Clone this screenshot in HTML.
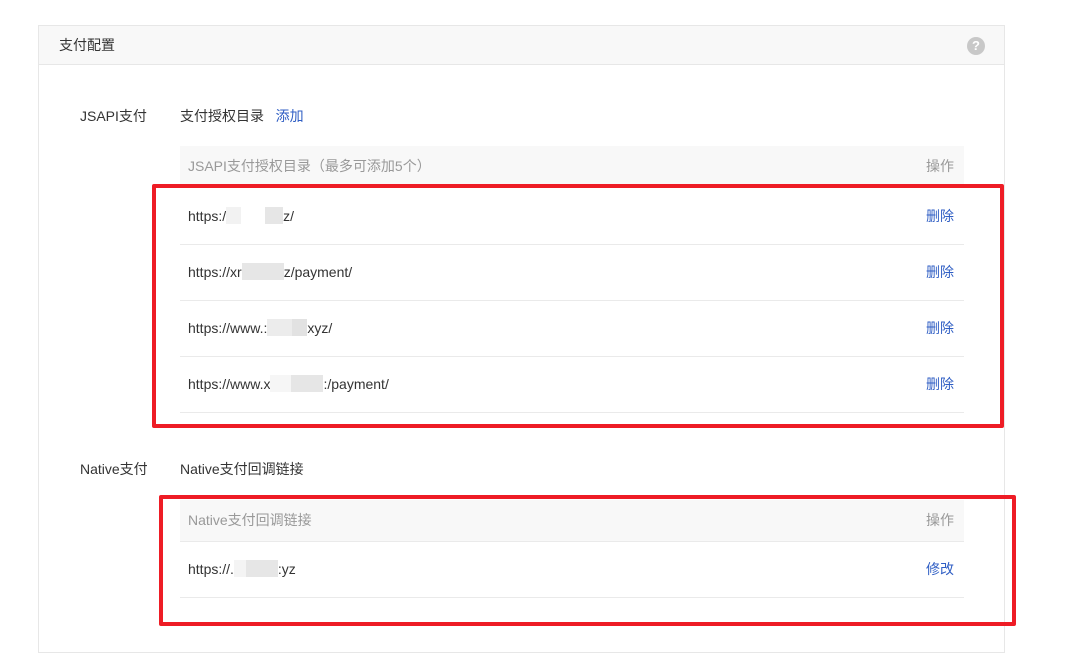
<!DOCTYPE html>
<html><head><meta charset="utf-8"><style>
*{margin:0;padding:0;box-sizing:border-box}
body{width:1077px;height:667px;background:#fff;font-family:"Liberation Sans","Noto Sans CJK SC",sans-serif;font-size:14px;color:#333;position:relative;overflow:hidden}
.card{position:absolute;left:38px;top:25px;width:967px;height:628px;border:1px solid #e7e7e7}
.hd{height:39px;background:#f8f8f8;border-bottom:1px solid #e7e7e7;line-height:38px;padding-left:20px;font-size:14px;color:#333}
.help{position:absolute;right:19px;top:11px;width:18px;height:18px;border-radius:50%;background:#c8c8c8;color:#fff;font-size:13px;font-weight:bold;text-align:center;line-height:18px}
.t{position:absolute;white-space:nowrap}
.blue{color:#2f5ec4}
.th{position:absolute;left:180px;width:784px;background:#f8f8f8;color:#999;border-bottom:1px solid #eaeaea}
.row{position:absolute;left:180px;width:784px;border-bottom:1px solid #eaeaea}
.row span,.th span{position:absolute;left:8px}
.row b,.th b{position:absolute;right:10px;font-weight:normal}
.row b{color:#2f5ec4}
.m{display:inline-block;background:#e6e6e6;height:17px;vertical-align:middle;margin-top:-3px}
.red{position:absolute;border:4px solid #ee1c25;border-radius:2px}
</style></head><body>
<div class="card"><div class="hd">支付配置</div><div class="help">?</div></div>
<div class="t" style="left:80px;top:106px">JSAPI支付</div>
<div class="t" style="left:180px;top:106px">支付授权目录 &nbsp; <span class="blue">添加</span></div>
<div class="th" style="top:146px;height:39px;line-height:40px"><span>JSAPI支付授权目录（最多可添加5个）</span><b>操作</b></div>
<div class="row" style="top:189px;height:56px;line-height:55px"><span>https:/<i class="m" style="width:15px;background:#f2f2f2"></i><i class="m" style="width:24px;background:#fff"></i><i class="m" style="width:18px"></i>z/</span><b>删除</b></div>
<div class="row" style="top:245px;height:56px;line-height:55px"><span>https://xr<i class="m" style="width:42px"></i>z/payment/</span><b>删除</b></div>
<div class="row" style="top:301px;height:56px;line-height:55px"><span>https://www.:<i class="m" style="width:25px;background:#ececec"></i><i class="m" style="width:15px;background:#e2e2e2"></i>xyz/</span><b>删除</b></div>
<div class="row" style="top:357px;height:56px;line-height:55px"><span>https://www.x<i class="m" style="width:21px;background:#f6f6f6"></i><i class="m" style="width:32px"></i>:/payment/</span><b>删除</b></div>
<div class="t" style="left:80px;top:459px">Native支付</div>
<div class="t" style="left:180px;top:459px">Native支付回调链接</div>
<div class="th" style="top:500px;height:42px;line-height:40px"><span>Native支付回调链接</span><b>操作</b></div>
<div class="row" style="top:542px;height:56px;line-height:55px"><span>https://.<i class="m" style="width:12px;background:#f4f4f4"></i><i class="m" style="width:32px"></i>:yz</span><b>修改</b></div>
<div class="red" style="left:152px;top:184px;width:852px;height:244px"></div>
<div class="red" style="left:159px;top:495px;width:857px;height:131px"></div>
</body></html>
